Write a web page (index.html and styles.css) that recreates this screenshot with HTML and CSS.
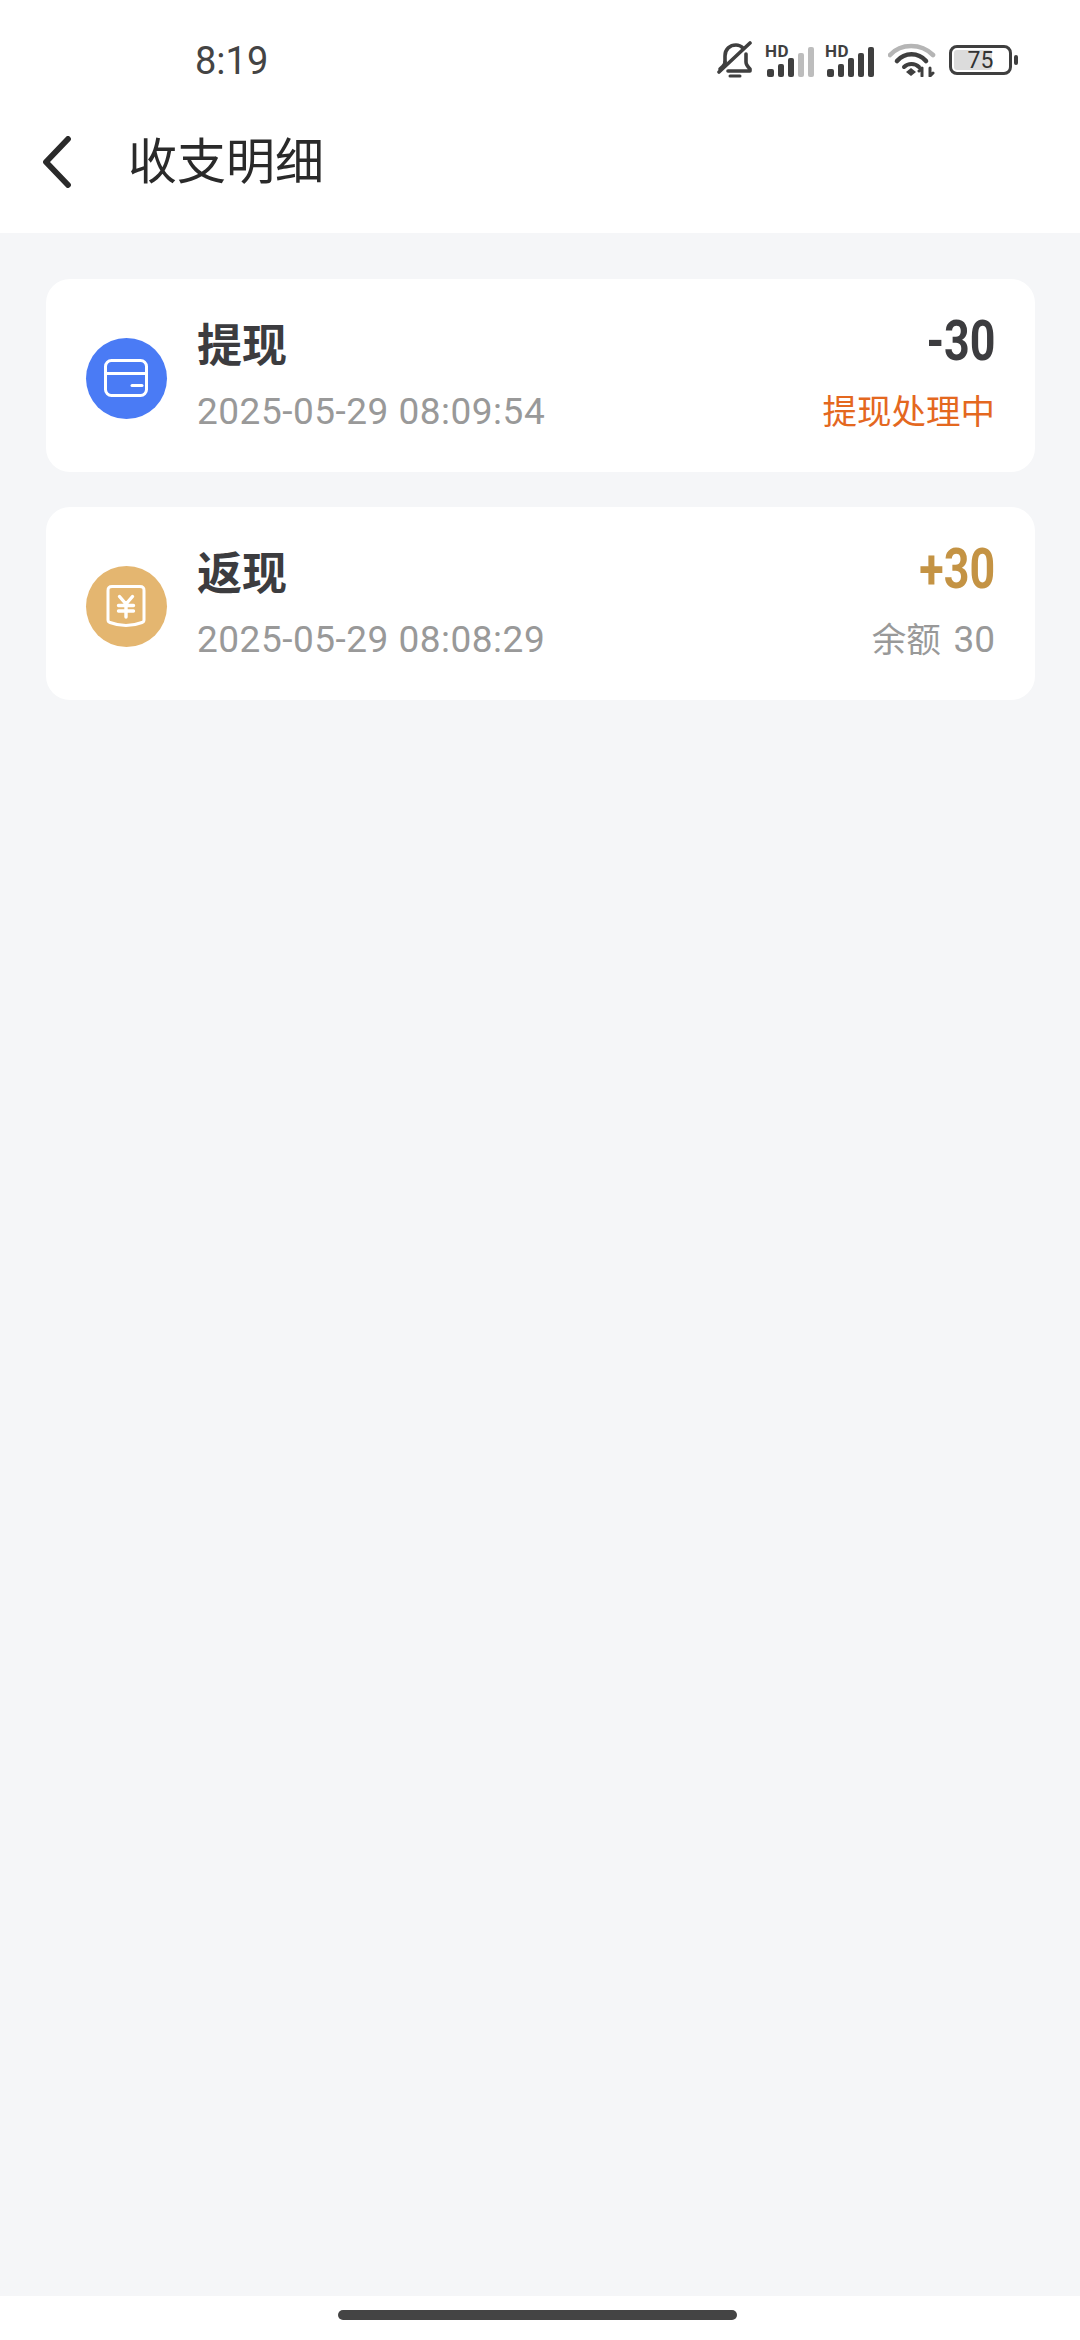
FILE: index.html
```html
<!DOCTYPE html>
<html lang="zh-CN">
<head>
  <meta charset="UTF-8" />
  <title>收支明细</title>
  <link rel="stylesheet" href="styles.css">
</head>
<body>
  <header class="top">
    <div class="status">
      <span class="time">8:19</span>
      <div class="status-icons">
        <svg class="ic-bell" width="36" height="38" viewBox="0 0 36 38" fill="none" stroke="#3f3f3f" stroke-width="3.6" stroke-linecap="round" stroke-linejoin="round">
          <path d="M8 21V15C8 8 13 4 19 4c3 0 5 1 7 3"/>
          <path d="M29 13v8c0 3 2 5 4 7v2H11"/>
          <path d="M8 21c0 3-3 5-5 7"/>
          <path d="M2 31L33 2"/>
          <path d="M13 35h10" stroke-width="3"/>
        </svg>
        <svg class="ic-signal" width="50" height="38" viewBox="0 0 50 38">
          <text x="0" y="16" class="hd">HD</text>
          <rect x="2" y="28" width="7" height="8" rx="2" fill="#3f3f3f"/>
          <rect x="13" y="23" width="6" height="13" rx="2" fill="#3f3f3f"/>
          <rect x="23" y="17" width="6" height="19" rx="2" fill="#3f3f3f"/>
          <rect x="33" y="12" width="6" height="24" rx="2" fill="#bdbdbd"/>
          <rect x="43" y="6" width="6" height="30" rx="2" fill="#bdbdbd"/>
        </svg>
        <svg class="ic-signal" width="50" height="38" viewBox="0 0 50 38">
          <text x="0" y="16" class="hd">HD</text>
          <rect x="2" y="28" width="7" height="8" rx="2" fill="#3f3f3f"/>
          <rect x="13" y="23" width="6" height="13" rx="2" fill="#3f3f3f"/>
          <rect x="23" y="17" width="6" height="19" rx="2" fill="#3f3f3f"/>
          <rect x="33" y="12" width="6" height="24" rx="2" fill="#3f3f3f"/>
          <rect x="43" y="6" width="6" height="30" rx="2" fill="#3f3f3f"/>
        </svg>
        <svg class="ic-wifi" width="48" height="34" viewBox="0 0 48 34" fill="none" stroke-linecap="round">
          <path d="M2 12C13 0 33 0 45 12" stroke="#b5b5b5" stroke-width="4.6"/>
          <path d="M9 18C17 9 30 9 38 18" stroke="#3f3f3f" stroke-width="4.6"/>
          <path d="M16 24c4-4 11-4 15 0" stroke="#3f3f3f" stroke-width="4"/>
          <path d="M18 29l5-4 5 4-5 4z" fill="#3f3f3f"/>
          <path d="M34 33v-8m-3 3l3-3M42 25v8m3-3l-3 3" stroke="#3f3f3f" stroke-width="3"/>
        </svg>
        <div class="battery">
          <div class="battery-body">
            <span class="battery-fill"></span>
            <span class="battery-num">75</span>
          </div>
          <span class="battery-nub"></span>
        </div>
      </div>
    </div>
    <nav class="nav">
      <svg class="back" width="28" height="52" viewBox="0 0 28 52" fill="none" stroke="#2a2a2a" stroke-width="5.8" stroke-linecap="round" stroke-linejoin="round">
        <path d="M25 3L3 26l22 23"/>
      </svg>
      <h1>收支明细</h1>
    </nav>
  </header>

  <main class="list">
    <section class="card">
      <div class="badge badge-blue">
        <svg width="80" height="80" viewBox="0 0 80 80" fill="none" stroke="#fff" stroke-width="3">
          <rect x="19.5" y="22.5" width="41" height="35" rx="6"/>
          <path d="M19.5 35.5h41"/>
          <path d="M46 47.5h10" stroke-linecap="round"/>
        </svg>
      </div>
      <div class="info">
        <div class="name">提现</div>
        <div class="date">2025-05-29 08:09:54</div>
      </div>
      <div class="side">
        <div class="amount">-30</div>
        <div class="note note-orange">提现处理中</div>
      </div>
    </section>

    <section class="card">
      <div class="badge badge-tan">
        <svg width="80" height="80" viewBox="0 0 80 80" fill="none" stroke="#fff" stroke-width="3" stroke-linecap="round" stroke-linejoin="round">
          <path d="M26 20.5h28c3 0 4 1 4 4V54c0 1-.5 2-2 2.5-10.500 4-21.500 4-32 0-1.500-.5-2-1.500-2-2.500V24.500c0-3 1-4 4-4z"/>
          <path d="M33.500 30.500l6.500 7.500 6.500-7.500M32.500 39.500h15M32.500 45h15M40 38v13" stroke-width="3.4"/>
        </svg>
      </div>
      <div class="info">
        <div class="name">返现</div>
        <div class="date">2025-05-29 08:08:29</div>
      </div>
      <div class="side">
        <div class="amount amount-gold">+30</div>
        <div class="note">余额 <span class="note-num">30</span></div>
      </div>
    </section>
  </main>

  <footer class="home">
    <span class="home-bar"></span>
  </footer>
</body>
</html>
```

FILE: styles.css
```css
* { box-sizing: border-box; }
html, body { margin: 0; padding: 0; }
body {
  width: 1080px;
  height: 2340px;
  display: flex;
  flex-direction: column;
  background-color: #f5f6f8;
  font-family: "Roboto", "Noto Sans CJK SC", sans-serif;
  color: #3c3c3f;
}

.top { background-color: #fff; height: 233px; flex: none; }

.status {
  height: 90px;
  padding: 32px 62px 0 195px;
  display: flex;
  align-items: center;
  justify-content: space-between;
}
.time { font-size: 38px; line-height: 58px; color: #444; }
.status-icons { display: flex; align-items: center; margin-top: -2px; }
.ic-bell { margin-right: 12px; }
.ic-signal { margin-right: 10px; }
.ic-wifi { margin: 0 13px 0 3px; }
.hd { font: bold 17px "Roboto", sans-serif; letter-spacing: .5px; fill: #3f3f3f; }

.battery { display: flex; align-items: center; }
.battery-body {
  position: relative;
  width: 63px;
  height: 30px;
  border: 3.5px solid #3f3f3f;
  border-radius: 8px;
  display: flex;
  align-items: center;
  justify-content: center;
}
.battery-fill {
  position: absolute;
  left: 2px;
  top: 2px;
  bottom: 2px;
  width: 38px;
  border-radius: 3px;
  background-color: #dcdcdc;
}
.battery-num { position: relative; font-size: 23px; line-height: 23px; color: #333; }
.battery-nub { width: 4px; height: 10px; margin-left: 2px; border-radius: 2px; background-color: #3f3f3f; }

.nav { height: 143px; padding-left: 43px; display: flex; align-items: center; }
.back { margin-right: 57px; }
.nav h1 { margin: 0; padding-top: 2px; font-size: 49px; line-height: 60px; font-weight: 400; color: #2a2a2a; }

.list {
  flex: 1;
  padding: 46px 45px 0 46px;
  display: flex;
  flex-direction: column;
  gap: 35px;
}
.card {
  height: 193px;
  padding: 0 40px 0 40px;
  display: flex;
  align-items: center;
  background-color: #fff;
  border-radius: 24px;
}
.badge { width: 81px; height: 81px; border-radius: 50%; flex: none; margin-top: 5px; }
.badge svg { display: block; }
.badge-blue { background-color: #4a7bf5; }
.badge-tan { background-color: #e4b670; }

.info { margin-left: 30px; flex: 1; }
.name { font-size: 45px; line-height: 52px; font-weight: 700; margin: 3px 0 17px; }
.date { font-size: 37px; line-height: 44px; letter-spacing: .5px; color: #999; }

.side { text-align: right; }
/* no condensed face installed, so the digits are squeezed */
.amount {
  font-size: 56px;
  line-height: 52px;
  font-weight: 700;
  margin: -3px 0 23px;
  transform: scaleX(.8);
  transform-origin: right center;
}
.amount-gold { color: #c49344; }
.note { font-size: 34.5px; line-height: 44px; color: #999; }
.note-num { font-size: 37px; margin-left: 4px; }
.note-orange { color: #e4681f; }

.home {
  height: 44px;
  flex: none;
  background-color: #fff;
  display: flex;
  justify-content: center;
  padding: 14px 6px 0 0;
}
.home-bar { width: 399px; height: 10px; border-radius: 5px; background-color: #444; }
```
